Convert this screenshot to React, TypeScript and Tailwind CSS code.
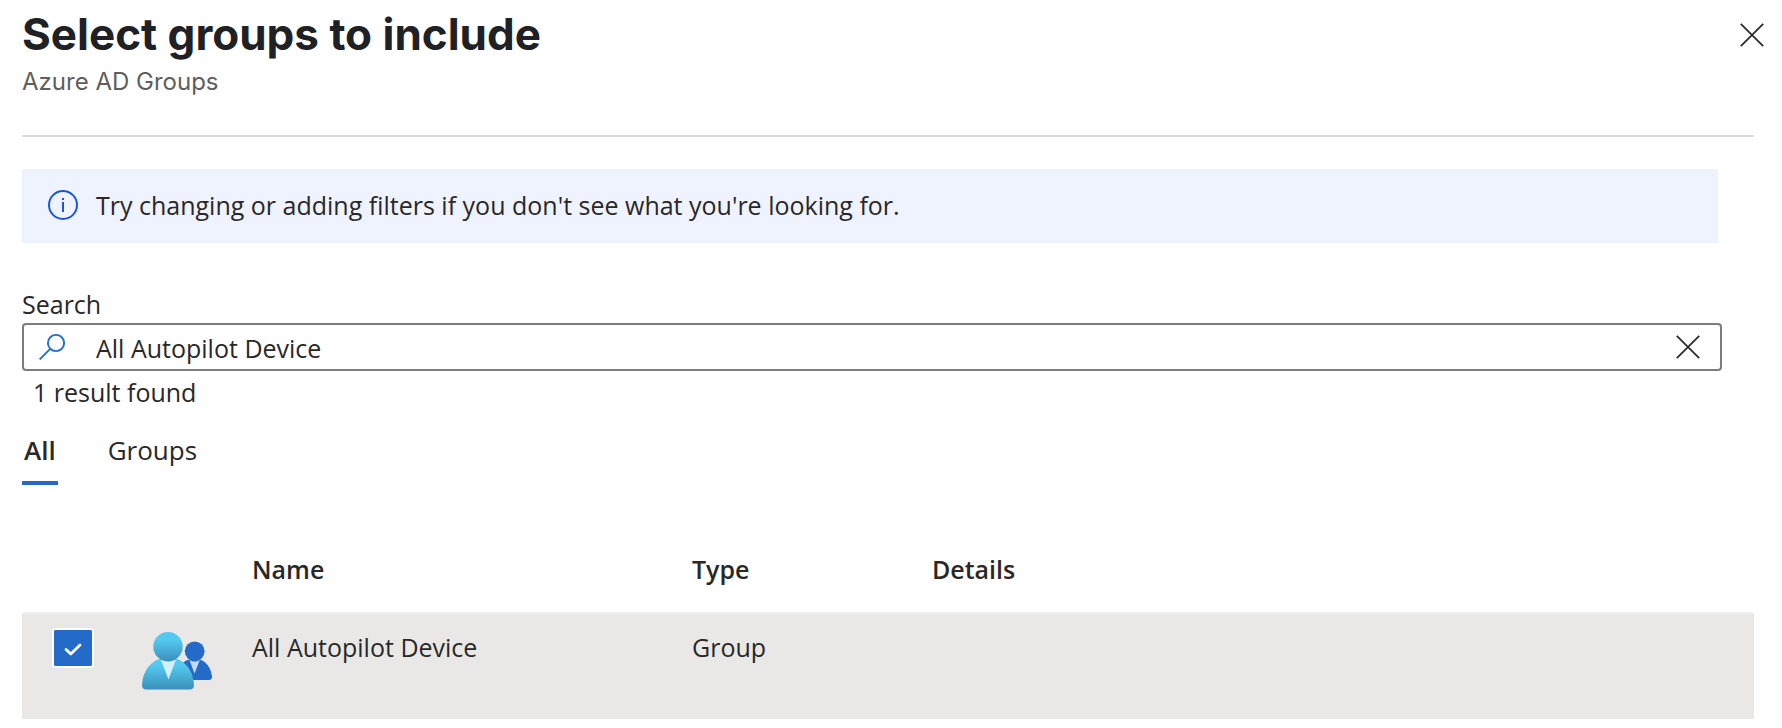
import { useState } from "react";

function CrossIcon({ className }: { className: string }) {
  return (
    <svg viewBox="0 0 24 24" className={className} fill="none" aria-hidden="true">
      <path d="M0.8 0.8 23.2 23.2M23.2 0.8 0.8 23.2" stroke="currentColor" strokeWidth="1.9" />
    </svg>
  );
}

function InfoIcon() {
  return (
    <svg viewBox="0 0 30 30" className="size-[30px] shrink-0" fill="none" aria-hidden="true">
      <circle cx="15" cy="15" r="14" stroke="#1a56db" strokeWidth="2" />
      <path d="M15 12v10M15 8v2" stroke="#1a56db" strokeWidth="2" />
    </svg>
  );
}

function SearchIcon() {
  return (
    <svg viewBox="0 0 26 26" className="size-[26px] shrink-0" fill="none" aria-hidden="true">
      <circle cx="17" cy="9" r="8.1" stroke="#2470d0" strokeWidth="1.9" />
      <path d="M11.200 14.800 0.7 25.4" stroke="#2470d0" strokeWidth="1.9" />
    </svg>
  );
}

function GroupIcon() {
  return (
    <svg viewBox="0 0 70 58" className="h-[58px] w-[70px]" aria-hidden="true">
      <defs>
        <linearGradient id="head" x1="0" y1="0" x2="0" y2="1">
          <stop offset="0.25" stopColor="#54caf0" />
          <stop offset="1" stopColor="#3b8fba" />
        </linearGradient>
        <linearGradient id="body" x1="0" y1="0" x2="0" y2="1">
          <stop offset="0.2" stopColor="#54caf0" />
          <stop offset="1" stopColor="#3b8fba" />
        </linearGradient>
      </defs>
      <path d="M67 48a3 3 0 0 0 3-3.400C69 36 64.500 30 58.500 27.800H46C40 30 36 36 35 44.600a3 3 0 0 0 3 3.400z" fill="#246bc9" />
      <path d="M47.500 28 52.500 41.500 57.800 28q-5 3-10.300 0z" fill="#c5daf5" />
      <circle cx="52.700" cy="19.300" r="9.900" fill="#246bc9" />
      <path d="M48 57.500a4 4 0 0 0 4-4.500C51.500 39 43 29 34.500 27H18C9 29 .5 39 0 53a4 4 0 0 0 4 4.500z" fill="url(#body)" />
      <path d="M18.800 27.500 26.500 47.500 34 27.500q-7.500 4-15.200 0z" fill="#d3f1fc" />
      <circle cx="26" cy="14.700" r="14.700" fill="url(#head)" />
    </svg>
  );
}

const tabs = ["All", "Groups"];
const rows = [{ name: "All Autopilot Device", type: "Group", details: "" }];

export default function App() {
  const [query, setQuery] = useState("All Autopilot Device");
  const [tab, setTab] = useState("All");
  const [checked, setChecked] = useState(true);

  return (
    <main className="bg-white pb-2 pl-[22px] font-['Open_Sans','Noto_Sans',sans-serif] text-[25px] leading-9 text-[#292827]">
      <header className="flex items-start justify-between pr-[18px] pt-[6px] font-[Inter,sans-serif]">
        <div>
          <h1 className="text-[44px] font-bold leading-[56px] text-[#202124]">Select groups to include</h1>
          <p className="mt-1 text-[24px] leading-8 text-[#5f5e5c]">Azure AD Groups</p>
        </div>
        <button type="button" aria-label="Close" className="mt-[17px] text-[#323130]">
          <CrossIcon className="size-6" />
        </button>
      </header>
      <div className="mr-7 mt-[37px] h-[2px] bg-[#d9d9d9]" />

      <div role="status" className="mr-16 mt-8 flex items-center gap-[18px] bg-[#eff3ff] pb-5 pl-[26px] pt-[18px]">
        <InfoIcon />
        <p>Try changing or adding filters if you don't see what you're looking for.</p>
      </div>

      <section className="mr-[60px] mt-[45px]">
        <label htmlFor="search" className="block leading-8">Search</label>
        <div className="mt-[3px] flex h-12 items-center rounded-[4px] border-2 border-[#7f7d7b] pl-[15px] pr-5">
          <SearchIcon />
          <input
            id="search"
            type="text"
            value={query}
            onChange={(e) => setQuery(e.target.value)}
            className="ml-[31px] min-w-0 flex-1 bg-transparent pt-[2px] outline-none"
          />
          <button type="button" aria-label="Clear search" onClick={() => setQuery("")} className="text-[#323130]">
            <CrossIcon className="size-6" />
          </button>
        </div>
        <p className="ml-[11px] mt-[5px] leading-8">1 result found</p>
      </section>

      <div role="tablist" className="mt-6 flex gap-12 text-[26px]">
        {tabs.map((t) => (
          <button
            key={t}
            type="button"
            role="tab"
            aria-selected={t === tab}
            onClick={() => setTab(t)}
            className={
              t === tab
                ? "border-b-4 border-[#246bc9] px-[2px] pb-[13px] font-semibold"
                : "border-b-4 border-transparent px-[2px] pb-[13px]"
            }
          >
            {t}
          </button>
        ))}
      </div>

      <div className="mr-7">
        <table className="w-full table-fixed text-left">
          <colgroup>
            <col className="w-[120px]" />
            <col className="w-[110px]" />
            <col className="w-[440px]" />
            <col className="w-[240px]" />
            <col />
          </colgroup>
          <thead>
            <tr className="h-[128px] align-bottom">
              <td />
              <td />
              <th scope="col" className="pb-[25px] font-semibold">Name</th>
              <th scope="col" className="pb-[25px] font-semibold">Type</th>
              <th scope="col" className="pb-[25px] font-semibold">Details</th>
            </tr>
          </thead>
          <tbody>
            {rows.map((r) => (
              <tr key={r.name} className="h-[106px] border-t-2 border-[#f2f1ef] bg-[#e9e8e6] align-top">
                <td className="pl-[30px] pt-[14px]">
                  <label className="grid h-10 w-[42px] cursor-pointer place-items-center rounded-[4px] border-2 border-white bg-[#246bc9]">
                    <input
                      type="checkbox"
                      aria-label={"Select " + r.name}
                      checked={checked}
                      onChange={(e) => setChecked(e.target.checked)}
                      className="col-start-1 row-start-1 h-9 w-[38px] appearance-none rounded-[2px] bg-white checked:bg-[#246bc9]"
                    />
                    <svg viewBox="0 0 38 36" className="pointer-events-none col-start-1 row-start-1 h-9 w-[38px]" fill="none" aria-hidden="true">
                      <path d="M12 19.500 16.800 24 26 15" stroke="#fff" strokeWidth="2.800" strokeLinecap="round" strokeLinejoin="round" />
                    </svg>
                  </label>
                </td>
                <td className="pt-[18px]"><GroupIcon /></td>
                <td className="pt-[15px]">{r.name}</td>
                <td className="pt-[15px]">{r.type}</td>
                <td className="pt-[15px]">{r.details}</td>
              </tr>
            ))}
          </tbody>
        </table>
      </div>
    </main>
  );
}
